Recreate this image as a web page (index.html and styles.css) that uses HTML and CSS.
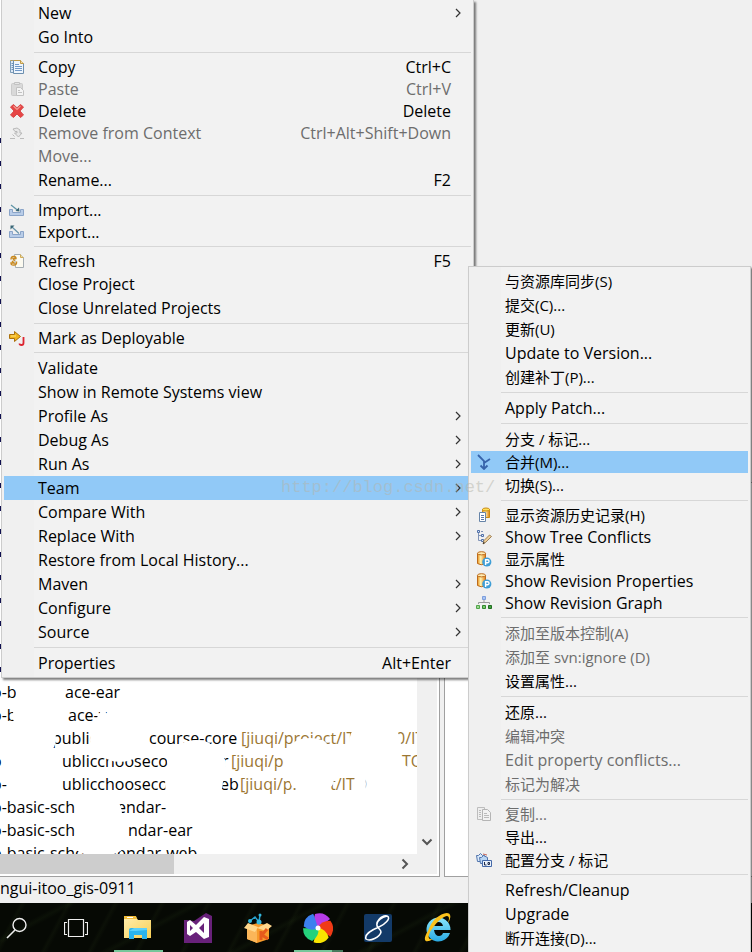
FILE: index.html
```html
<!DOCTYPE html>
<html lang="zh-CN">
<head>
<meta charset="utf-8">
<title>Workspace</title>
<link rel="stylesheet" href="styles.css">
</head>
<body>
<svg class="defs" aria-hidden="true">
  <defs>
    <linearGradient id="gold" x1="0" x2="1"><stop offset="0" stop-color="#e8901c"/><stop offset=".4" stop-color="#fff3b0"/><stop offset="1" stop-color="#e07a10"/></linearGradient>
    <linearGradient id="folder" x1="0" y1="0" x2="1" y2="1"><stop offset="0" stop-color="#ffeeae"/><stop offset="1" stop-color="#f8cf55"/></linearGradient>
    <linearGradient id="ie" x1="0" y1="0" x2="0" y2="1"><stop offset="0" stop-color="#8be6fb"/><stop offset="1" stop-color="#28a9e2"/></linearGradient>
  </defs>
  <symbol id="chev" viewBox="0 0 6 10"><path d="M1 1l4 4-4 4" fill="none" stroke="#333" stroke-width="1.2"/></symbol>
  <symbol id="copy" viewBox="0 0 16 16"><path d="M1.500 1.500h7v12h-7z" fill="#dbe8f6" stroke="#7d9dba"/><path d="M2.500 4.500h2M2.500 6.500h2M2.500 8.500h2M2.500 10.500h2" stroke="#6d93bd"/><path d="M4.500 1.500h7l3 3v10h-10z" fill="#eef5fc" stroke="#6d8fae"/><path d="M1.500 1.500h2M4.500 1.500h7l3 3" fill="none" stroke="#c09a48"/><path d="M11.500 1.500v3h3" fill="#f3dfa5" stroke="#c09a48"/><path d="M6 5.500h4M6 7.500h7M6 9.500h7M6 11.500h7" stroke="#7199c8"/></symbol>
  <symbol id="copy-off" viewBox="0 0 16 16"><path d="M1.500 1.500h7v12h-7z" fill="#eee" stroke="#bdbdbd"/><path d="M3 4.500h2M3 6.500h2M3 8.500h2M3 10.500h2" stroke="#bbb"/><path d="M6.500 3.500h5l3 3v8h-8z" fill="#f2f2f2" stroke="#b5b5b5"/><path d="M8 7.500h3M8 9.500h5M8 11.500h5" stroke="#bbb"/></symbol>
  <symbol id="paste" viewBox="0 0 16 16"><rect x="2.500" y="2.500" width="11" height="12" rx="1" fill="#d9d9d9" stroke="#cacaca"/><path d="M5.500 3.500v-2h5v2z" fill="#e5e5e5" stroke="#c2c2c2"/><path d="M7.500 6.500h4l3 3v5h-7z" fill="#f4f4f4" stroke="#c2c2c2"/><path d="M9 9.500h2M9 11.500h4" stroke="#c2c2c2"/></symbol>
  <symbol id="delete" viewBox="0 0 16 16"><path d="M4.500 1.500L8 4.800 11.500 1.500 14.500 4 11 8l3.500 4-3 2.500L8 11l-3.500 3.500-3-2.500L5 8 1.500 4z" fill="#e64545" stroke="#d84848" stroke-linejoin="round"/><path d="M4.500 3l3.500 3.500L11.500 3" fill="none" stroke="#f19a91" stroke-width="1.200"/></symbol>
  <symbol id="remove" viewBox="0 0 16 16"><path d="M1 13.500h5M11 13.500h4" stroke="#bbb"/><path d="M4 4l4-1 3 2v3h2l-3.500 4L5.500 8H8V6.500H6z" fill="#e8e8e8" stroke="#b8b8b8"/><path d="M3.500 9.500l2 2" stroke="#bbb"/></symbol>
  <symbol id="import" viewBox="0 0 16 16"><path d="M.500 7.500h3v3h8v-3h3v6H.500z" fill="#b9cde8" stroke="#8aa4c8"/><path d="M2 3l7 5.500" stroke="#5d93a6" stroke-width="1.200"/><path d="M10.500 9.500l-.5-4-3.500 3.500z" fill="#386574"/></symbol>
  <symbol id="export" viewBox="0 0 16 16"><path d="M.500 7.500h3v3h8v-3h3v6H.500z" fill="#b9cde8" stroke="#8aa4c8"/><path d="M3 3l7 6.500" stroke="#6693a8" stroke-width="1.200"/><path d="M1.500 1.500h4l-4 4z" fill="#386574"/></symbol>
  <symbol id="refresh" viewBox="0 0 16 16"><path d="M5.500 1.500h6l3 3v10h-8z" fill="#fcfaf0" stroke="#a5adb2"/><path d="M11.500 1.500v3h3" fill="#f2dda0" stroke="#d0ab58"/><path d="M2 6.500Q2 3 5 3.500q2 0 2 2H4l1.500 2.500M7.500 8.500Q8 12 5 12q-3 .5-3-2h3L3 8" fill="none" stroke="#c9891d" stroke-width="1.400"/></symbol>
  <symbol id="deploy" viewBox="0 0 16 16"><path d="M.500 4.500h5v-3l6 5-6 5v-3h-5z" fill="#f1b51d" stroke="#ab700c"/><path d="M2 6h5" stroke="#ffe17a"/><path d="M14.500 7v6q0 2-2 2-2 0-2-1.500" fill="none" stroke="#dc2430" stroke-width="1.800"/></symbol>
  <symbol id="merge" viewBox="0 0 16 16"><path d="M2 1l6 6v8M14 5L8 9M4.500 11.500L8 15l3.500-3.500" fill="none" stroke="#3763aa" stroke-width="1.800"/></symbol>
  <symbol id="history" viewBox="0 0 16 16"><path d="M6.500 2.500v8h7v-8z" fill="url(#gold)" stroke="#c98a12"/><ellipse cx="10" cy="2.500" rx="3.500" ry="1.500" fill="#ffe15a" stroke="#c98a12"/><path d="M3.500 5.500h6v9h-6z" fill="#fff" stroke="#6684a8"/><path d="M5 8.500h3M5 10.500h3M5 12.500h3" stroke="#5b77aa"/></symbol>
  <symbol id="conflict" viewBox="0 0 16 16"><path d="M2.500 3v8.500H6M2.500 6.500H6M5 2.500h2" fill="none" stroke="#8093b7"/><path d="M1.500 1.500h2v2h-2zM5.500 5.500h2v2h-2zM5.500 10.500h2v2h-2z" fill="#dfe9fa" stroke="#5170a8"/><path d="M7 15l1-3.500L13.500 6 15.500 7.500 10 13z" fill="#efd09a" stroke="#8b6b3c" stroke-width=".8"/><path d="M7 15l.5-2 1.500 1z" fill="#222"/></symbol>
  <symbol id="props" viewBox="0 0 16 16"><path d="M1.500 2.500v10q3.500 2.500 8 0v-10z" fill="url(#gold)" stroke="#bd6a1a"/><ellipse cx="5.500" cy="2.300" rx="4" ry="1.600" fill="#ffedb5" stroke="#bd6a1a"/><circle cx="10.800" cy="11" r="4.600" fill="#3f9ed6"/><path d="M9.600 14V8.800h2a1.400 1.400 0 010 2.900h-2" fill="none" stroke="#fff" stroke-width="1.400"/></symbol>
  <symbol id="graph" viewBox="0 0 16 16"><path d="M8 5v2.500M2.500 9V7.500h11V9" fill="none" stroke="#999"/><path d="M6.500 1.500h3v3h-3z" fill="#a8c6f5" stroke="#7f9fdc"/><path d="M.500 10.500h3v3h-3z" fill="#9bd890" stroke="#52a54b"/><path d="M6.500 10.500h3v3h-3z" fill="#76c96c" stroke="#33872e"/><path d="M12.500 10.500h3v3h-3z" fill="#45a33e" stroke="#216e22"/></symbol>
  <symbol id="branches" viewBox="0 0 16 16"><path d="M.500 3.500h2l2-2 2 2h2v6h-7z" fill="#d9e9fa" stroke="#5275ad"/><path d="M3.500 5.500h2l2-2 4 2v6h-7z" fill="#b9d6f4" stroke="#5275ad"/><path d="M7 2l4 1" stroke="#c5665a"/><path d="M6.500 8.500h9v6h-9z" fill="#eaf2fc" stroke="#4569a8"/><path d="M8.500 10v3h2M12 10.500h1.500v2H12z" fill="none" stroke="#1d2948"/></symbol>
</svg>

<div class="app">
  <main class="workbench">
    <section class="explorer" aria-label="Explorer">
      <div class="tree">
        <div class="row r1"><span>o-b</span><span>ace-ear</span></div>
        <div class="row r2"><span>o-b</span><span>ace-v</span></div>
        <div class="row r3"><span></span><span>public</span><span>course-core</span><span class="repo">[jiuqi/project/IT</span><span class="repo">0/ITO</span></div>
        <div class="row r4"><span>o</span><span>ublicchooseco</span><span>r</span><span class="repo">[jiuqi/p</span><span class="repo">TO</span></div>
        <div class="row r5"><span>o-</span><span>ublicchooseco</span><span>eb</span><span class="repo">[jiuqi/p.</span><span class="repo">t/ITO</span></div>
        <div class="row r6"><span>o-basic-sch</span><span>lendar-</span></div>
        <div class="row r7"><span>o-basic-sch</span><span>ndar-ear</span></div>
        <div class="row r8"><span>o-basic-schoo</span><span>lendar-web</span></div>
        <svg class="smudge" viewBox="0 0 417 200" width="417" height="200" aria-hidden="true">
          <g fill="#fff">
            <ellipse cx="40" cy="38" rx="24" ry="14"/><ellipse cx="40" cy="62" rx="28" ry="14"/>
            <ellipse cx="61" cy="34" rx="6" ry="9"/><ellipse cx="103" cy="66" rx="6" ry="9"/>
            <ellipse cx="50" cy="84" rx="6" ry="12"/><ellipse cx="101" cy="86" rx="11" ry="14"/>
            <ellipse cx="120" cy="99" rx="18" ry="9"/><ellipse cx="196" cy="93" rx="16" ry="7"/>
            <ellipse cx="222" cy="111" rx="4" ry="8"/><ellipse cx="310" cy="91" rx="17" ry="7"/>
            <ellipse cx="355" cy="90" rx="6" ry="14"/><ellipse cx="396" cy="92" rx="5" ry="14"/>
            <ellipse cx="402" cy="118" rx="9" ry="7"/><ellipse cx="295" cy="127" rx="5" ry="6"/>
            <ellipse cx="330" cy="124" rx="4" ry="9"/><ellipse cx="360" cy="130" rx="6" ry="12"/>
            <ellipse cx="172" cy="105" rx="5" ry="10"/><ellipse cx="170" cy="130" rx="5" ry="12"/><ellipse cx="220" cy="127" rx="3" ry="10"/>
            <ellipse cx="99" cy="160" rx="23" ry="22"/><ellipse cx="99" cy="188" rx="28" ry="14"/>
          </g>
        </svg>
      </div>
      <div class="vscroll"><button class="step" aria-label="Scroll down"><svg width="12" height="8" viewBox="0 0 12 8"><path d="M1.500 1.500L6 6l4.500-4.500" fill="none" stroke="#555" stroke-width="2"/></svg></button></div>
      <div class="hscroll"><div class="thumb"></div><button class="step" aria-label="Scroll right"><svg width="8" height="12" viewBox="0 0 8 12"><path d="M1.500 1.500L6 6l-4.500 4.500" fill="none" stroke="#555" stroke-width="2"/></svg></button></div>
    </section>
    <section class="editor" aria-label="Editor"></section>
  </main>
  <footer class="status">ngui-itoo_gis-0911</footer>
  <nav class="taskbar" aria-label="Taskbar">
    <button class="search" aria-label="Search"><svg width="22" height="22" viewBox="0 0 22 22"><circle cx="13.500" cy="8" r="6.500" fill="none" stroke="#eee" stroke-width="1.400"/><path d="M9 13l-8 8" stroke="#eee" stroke-width="1.600"/></svg></button>
    <button class="views" aria-label="Task view"><svg width="24" height="20" viewBox="0 0 24 20"><path d="M4.500 1.500h15v17h-15zM3 4.500H.500v12H3M21 4.500h2.500v12H21" fill="none" stroke="#eee" stroke-width="1.200"/></svg></button>
    <button class="app-icon open" aria-label="Files"><svg width="28" height="26" viewBox="0 0 28 26"><path d="M0 2h12l2 3h13v18H0z" fill="url(#folder)"/><path d="M0 1h12l1 3H0z" fill="#f0bd3c"/><path d="M3 2h6v1H3z" fill="#fff"/><path d="M5 24V15q0-2 2-2h14q2 0 2 2v9h-5v-4h-8v4z" fill="#2bb4ee"/><path d="M5 16l5-3h13v2L12 16z" fill="#5bd0fa"/></svg></button>
    <button class="app-icon" aria-label="Visual Studio"><svg width="28" height="30" viewBox="0 0 28 30"><path d="M0 7h3l7 1L22 0l6 3v27H0z" fill="#68217a"/><path fill-rule="evenodd" d="M20 4l5 2v18l-5 2-8-7-6 4-3-2V9l3-2 6 5zM20 10l-5 5 5 5zM6 12v6l3-3z" fill="#fff"/></svg></button>
    <button class="app-icon" aria-label="Box"><svg width="28" height="30" viewBox="0 0 28 30"><path d="M3 13l11-3 11 3v13l-12 4L3 26z" fill="#f79a2b"/><path d="M3 13l10 3v14L3 26z" fill="#fbb659"/><path d="M0 15l4-5 10 4-3 5zM13 15l10-5 5 3-6 5z" fill="#ffd78c"/><path d="M17 18v9M23 16l-5 6 6 4" fill="none" stroke="#e65a1c" stroke-width="3"/><path d="M6 8l5-4 4 5 1-7M5 9l2-1M13 10h3" fill="none" stroke="#27a3d0" stroke-width="1.500"/><circle cx="6" cy="8" r="2" fill="#35b8dd"/><circle cx="15" cy="9" r="2.500" fill="#35b8dd"/><circle cx="16" cy="2" r="1.500" fill="#35b8dd"/></svg></button>
    <button class="app-icon open grouped" aria-label="Browser"><svg width="30" height="30" viewBox="-15 -15 30 30"><g id="pinwheel"><path d="M0 0Q-6-5-3-14Q6-17 12-9Q10-7 0 0" fill="#b63ce8"/><path d="M0 0Q-6-5-3-14Q6-17 12-9Q10-7 0 0" fill="#f03a16" transform="rotate(72)"/><path d="M0 0Q-6-5-3-14Q6-17 12-9Q10-7 0 0" fill="#f9e500" transform="rotate(144)"/><path d="M0 0Q-6-5-3-14Q6-17 12-9Q10-7 0 0" fill="#25d27c" transform="rotate(216)"/><path d="M0 0Q-6-5-3-14Q6-17 12-9Q10-7 0 0" fill="#3c80ef" transform="rotate(288)"/></g><circle r="2.500" fill="#fff"/></svg></button>
    <button class="app-icon" aria-label="Notes"><svg width="28" height="28" viewBox="0 0 28 28"><rect width="28" height="28" rx="2" fill="#133a68"/><path d="M14 14C10 8 18 1 23 2c5 2-3 9-8 11S0 20 2 25c4 3 14-2 15-7 0-3-5-4-4-8 1-5 6-7 10-8" fill="none" stroke="#fff" stroke-width="1.500"/></svg></button>
    <button class="app-icon" aria-label="Internet Explorer"><svg width="30" height="30" viewBox="0 0 30 30"><path d="M27 20a12 12 0 11.500-3H11q1 6 5 6 3 0 4-3zM11 13h9q-1-4-4.500-4T11 13z" fill="url(#ie)" fill-rule="evenodd"/><path d="M5 18C-1 27 2 31 10 26 3 28 5 20 12 12S26 0 26 6l-1 4C32-2 22-3 12 6Q8 10 5 18z" fill="#fac21c"/></svg></button>
  </nav>
</div>
<div class="edge-marks" aria-hidden="true"></div>

<div class="menu context" role="menu" aria-label="Context menu">
  <button class="item" role="menuitem"><span class="label">New</span><svg class="arrow"><use href="#chev"/></svg></button>
  <button class="item" role="menuitem"><span class="label">Go Into</span></button>
  <hr>
  <button class="item slim" role="menuitem"><svg class="icon"><use href="#copy"/></svg><span class="label">Copy</span><span class="key">Ctrl+C</span></button>
  <button class="item slim" role="menuitem" disabled><svg class="icon"><use href="#paste"/></svg><span class="label">Paste</span><span class="key">Ctrl+V</span></button>
  <button class="item slim" role="menuitem"><svg class="icon"><use href="#delete"/></svg><span class="label">Delete</span><span class="key">Delete</span></button>
  <button class="item slim" role="menuitem" disabled><svg class="icon"><use href="#remove"/></svg><span class="label">Remove from Context</span><span class="key">Ctrl+Alt+Shift+Down</span></button>
  <button class="item" role="menuitem" disabled><span class="label">Move...</span></button>
  <button class="item" role="menuitem"><span class="label">Rename...</span><span class="key">F2</span></button>
  <hr>
  <button class="item slim" role="menuitem"><svg class="icon"><use href="#import"/></svg><span class="label">Import...</span></button>
  <button class="item slim" role="menuitem"><svg class="icon"><use href="#export"/></svg><span class="label">Export...</span></button>
  <hr>
  <button class="item slim" role="menuitem"><svg class="icon"><use href="#refresh"/></svg><span class="label">Refresh</span><span class="key">F5</span></button>
  <button class="item" role="menuitem"><span class="label">Close Project</span></button>
  <button class="item" role="menuitem"><span class="label">Close Unrelated Projects</span></button>
  <hr>
  <button class="item slim" role="menuitem"><svg class="icon"><use href="#deploy"/></svg><span class="label">Mark as Deployable</span></button>
  <hr>
  <button class="item" role="menuitem"><span class="label">Validate</span></button>
  <button class="item" role="menuitem"><span class="label">Show in Remote Systems view</span></button>
  <button class="item" role="menuitem"><span class="label">Profile As</span><svg class="arrow"><use href="#chev"/></svg></button>
  <button class="item" role="menuitem"><span class="label">Debug As</span><svg class="arrow"><use href="#chev"/></svg></button>
  <button class="item" role="menuitem"><span class="label">Run As</span><svg class="arrow"><use href="#chev"/></svg></button>
  <button class="item active" role="menuitem"><span class="label">Team</span><svg class="arrow"><use href="#chev"/></svg></button>
  <button class="item" role="menuitem"><span class="label">Compare With</span><svg class="arrow"><use href="#chev"/></svg></button>
  <button class="item" role="menuitem"><span class="label">Replace With</span><svg class="arrow"><use href="#chev"/></svg></button>
  <button class="item" role="menuitem"><span class="label">Restore from Local History...</span></button>
  <button class="item" role="menuitem"><span class="label">Maven</span><svg class="arrow"><use href="#chev"/></svg></button>
  <button class="item" role="menuitem"><span class="label">Configure</span><svg class="arrow"><use href="#chev"/></svg></button>
  <button class="item" role="menuitem"><span class="label">Source</span><svg class="arrow"><use href="#chev"/></svg></button>
  <hr>
  <button class="item" role="menuitem"><span class="label">Properties</span><span class="key">Alt+Enter</span></button>
</div>

<div class="menu team" role="menu" aria-label="Team">
  <button class="item zh" role="menuitem"><span class="label">与资源库同步(S)</span></button>
  <button class="item zh" role="menuitem"><span class="label">提交(C)...</span></button>
  <button class="item zh" role="menuitem"><span class="label">更新(U)</span></button>
  <button class="item" role="menuitem"><span class="label">Update to Version...</span></button>
  <button class="item zh" role="menuitem"><span class="label">创建补丁(P)...</span></button>
  <hr>
  <button class="item" role="menuitem"><span class="label">Apply Patch...</span></button>
  <hr>
  <button class="item zh" role="menuitem"><span class="label">分支 / 标记...</span></button>
  <button class="item zh slim active" role="menuitem"><svg class="icon"><use href="#merge"/></svg><span class="label">合并(M)...</span></button>
  <button class="item zh" role="menuitem"><span class="label">切换(S)...</span></button>
  <hr>
  <button class="item zh slim" role="menuitem"><svg class="icon"><use href="#history"/></svg><span class="label">显示资源历史记录(H)</span></button>
  <button class="item slim" role="menuitem"><svg class="icon"><use href="#conflict"/></svg><span class="label">Show Tree Conflicts</span></button>
  <button class="item zh slim" role="menuitem"><svg class="icon"><use href="#props"/></svg><span class="label">显示属性</span></button>
  <button class="item slim" role="menuitem"><svg class="icon"><use href="#props"/></svg><span class="label">Show Revision Properties</span></button>
  <button class="item slim" role="menuitem"><svg class="icon"><use href="#graph"/></svg><span class="label">Show Revision Graph</span></button>
  <hr>
  <button class="item zh" role="menuitem" disabled><span class="label">添加至版本控制(A)</span></button>
  <button class="item zh" role="menuitem" disabled><span class="label">添加至 svn:ignore (D)</span></button>
  <button class="item zh" role="menuitem"><span class="label">设置属性...</span></button>
  <hr>
  <button class="item zh" role="menuitem"><span class="label">还原...</span></button>
  <button class="item zh" role="menuitem" disabled><span class="label">编辑冲突</span></button>
  <button class="item" role="menuitem" disabled><span class="label">Edit property conflicts...</span></button>
  <button class="item zh" role="menuitem" disabled><span class="label">标记为解决</span></button>
  <hr>
  <button class="item zh slim" role="menuitem" disabled><svg class="icon"><use href="#copy-off"/></svg><span class="label">复制...</span></button>
  <button class="item zh" role="menuitem"><span class="label">导出...</span></button>
  <button class="item zh slim" role="menuitem"><svg class="icon"><use href="#branches"/></svg><span class="label">配置分支 / 标记</span></button>
  <hr>
  <button class="item" role="menuitem"><span class="label">Refresh/Cleanup</span></button>
  <button class="item" role="menuitem"><span class="label">Upgrade</span></button>
  <button class="item zh" role="menuitem"><span class="label">断开连接(D)...</span></button>
</div>
<div class="watermark">http://blog.csdn.net/</div>
</body>
</html>
```
FILE: styles.css
```css
* { box-sizing: border-box; }
body {
  margin: 0;
  height: 100vh;
  overflow: hidden;
  position: relative;
  background: #f0f0f0;
  color: #000;
  font: 16px/22px "Open Sans", "Noto Sans CJK SC", sans-serif;
}
button { border: 0; margin: 0; padding: 0; background: none; font: inherit; color: inherit; }
.defs { position: absolute; width: 0; height: 0; }

.app { display: grid; grid-template-rows: minmax(0, 1fr) 26px 49px; height: 100%; }
.workbench { display: grid; grid-template-columns: 440px 1fr; gap: 4px; min-height: 0; }
.explorer {
  display: grid;
  grid-template-columns: minmax(0, 1fr) 20px;
  grid-template-rows: minmax(0, 1fr) 20px;
  padding: 0 2px 2px 0;
  border: solid #a0a0a0;
  border-width: 0 1px 1px 0;
  background: #fff;
}
.tree {
  position: relative;
  display: flex;
  flex-direction: column;
  justify-content: flex-end;
  overflow: hidden;
  padding-top: 600px;
}
.row { display: grid; flex: none; height: 23px; line-height: 22px; margin-left: -8px; white-space: nowrap; }
.row:nth-child(8) { margin-bottom: -11px; }
.repo { color: #9b7632; }
.r1 { grid-template-columns: 73px 1fr; }
.r2 { grid-template-columns: 76px 1fr; }
.r3 { grid-template-columns: 60px 97px 92px 155px 1fr; }
.r4 { grid-template-columns: 70px 160px 9px 171px 1fr; }
.r5 { grid-template-columns: 70px 158px 20px 90px 1fr; }
.r6 { grid-template-columns: 121px 1fr; }
.r7 { grid-template-columns: 136px 1fr; }
.r8 { grid-template-columns: 121px 1fr; }
.smudge { position: absolute; left: 0; bottom: 0; }
.vscroll { display: flex; flex-direction: column; justify-content: flex-end; background: #f0f0f0; }
.hscroll { grid-column: 1 / -1; display: flex; justify-content: space-between; padding-right: 22px; background: #f0f0f0; }
.thumb { width: 42%; background: #cdcdcd; }
.step { display: grid; place-items: center; width: 20px; height: 24px; }
.hscroll .step { height: 20px; }
.editor {
  align-self: end;
  height: 45%;
  border: solid #a0a0a0;
  border-width: 1px 0 1px 1px;
  background: #fff;
}
.status { line-height: 22px; }
.edge-marks {
  position: absolute;
  left: 0;
  top: 135px;
  width: 1px;
  height: 552px;
  background: repeating-linear-gradient(#fff 0 3px, #101050 3px 8px, #fff 8px 23px);
}

.taskbar {
  display: flex;
  background:
    repeating-linear-gradient(118deg, transparent 0 17px, rgba(60, 80, 35, .1) 20px, transparent 24px 41px),
    repeating-linear-gradient(152deg, transparent 0 29px, rgba(50, 75, 30, .12) 33px, transparent 37px 60px),
    #060904;
}
.taskbar button { display: grid; place-items: center; }
.search { width: 34px; }
.views { width: 60px; margin: 0 2px 0 12px; }
.taskbar .app-icon { width: 60px; }
.open { background: linear-gradient(#76c69a, #76c69a) center bottom / 49px 2px no-repeat; }
.grouped { background-image: linear-gradient(90deg, #76c69a 38px, #47795d 38px); }

.menu {
  position: absolute;
  display: flex;
  flex-direction: column;
  border: 1px solid #ccc;
  padding: 2px;
  background: linear-gradient(90deg, #f0f0f0 32px, #f2f2f2 32px);
  box-shadow: 2px 2px 2px rgba(0, 0, 0, .5);
}
.context { left: 1px; top: 0; width: 473px; border-top: 0; padding-top: 1px; }
.team { left: 468px; top: 266px; width: 283px; }
.item { display: flex; align-items: center; height: 24px; padding-left: 34px; text-align: left; white-space: nowrap; }
.slim { height: 22px; }
.zh { font-size: 15px; }
.item:disabled { color: #6d6d6d; }
.active { background: #91c9f7; }
.icon { width: 16px; height: 16px; margin: 0 13px 0 -29px; flex: none; }
.label { flex: 1; }
.key { padding-right: 20px; }
.arrow { width: 6px; height: 10px; margin-right: 10px; }
hr { flex: none; align-self: stretch; width: auto; height: 1px; margin: 3px 0 3px 30px; border: 0; background: #d7d7d7; }
.watermark {
  position: absolute;
  left: 281px;
  top: 477px;
  color: rgba(180, 180, 170, .5);
  font: 17px/22px "Liberation Mono", monospace;
}
```
